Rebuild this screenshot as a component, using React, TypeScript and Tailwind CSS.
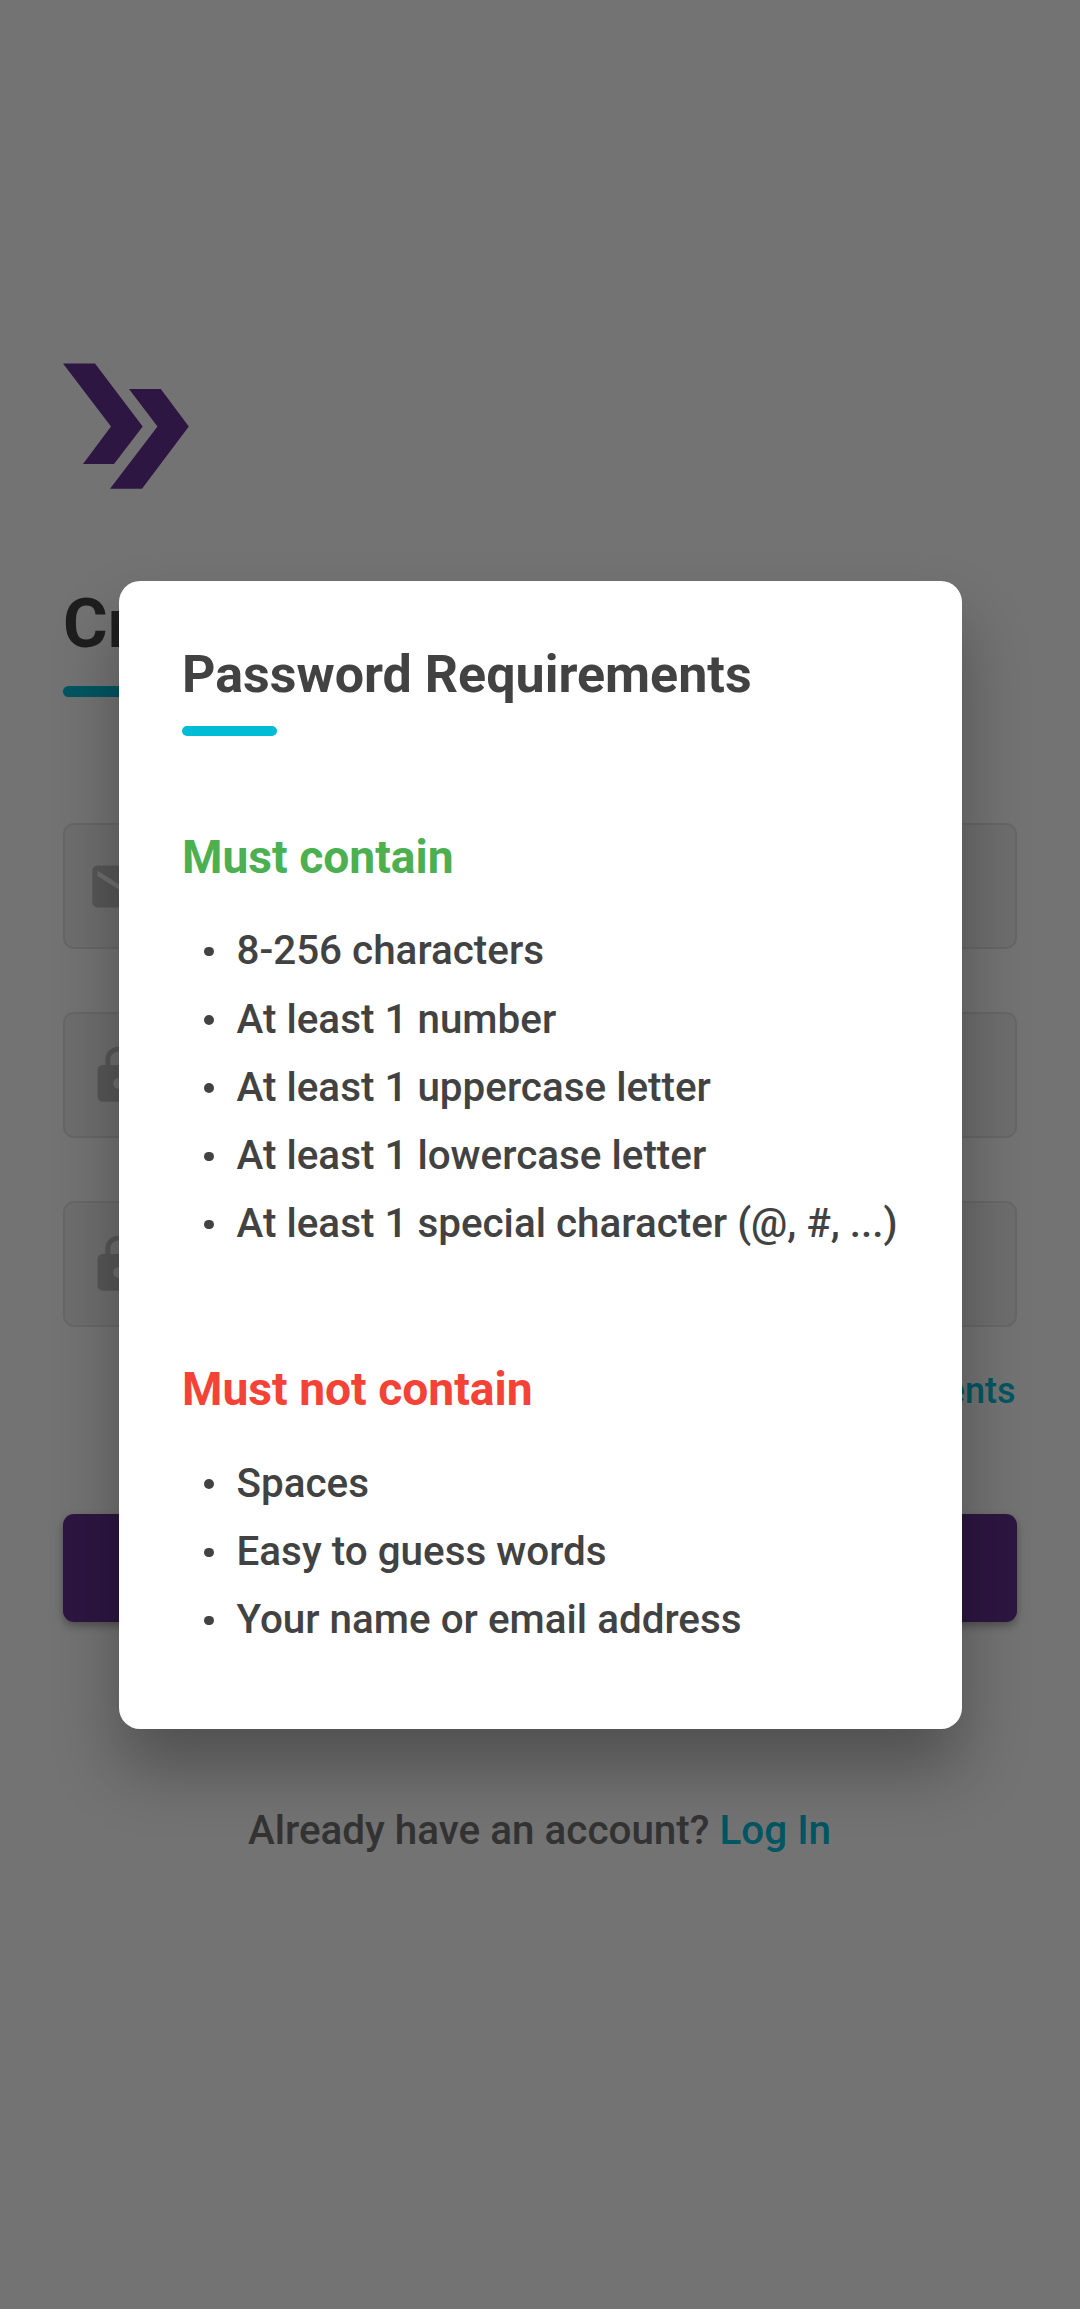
const contain = [
  '8-256 characters',
  'At least 1 number',
  'At least 1 uppercase letter',
  'At least 1 lowercase letter',
  'At least 1 special character (@, #, ...)',
];

const notContain = ['Spaces', 'Easy to guess words', 'Your name or email address'];

const MAIL =
  'M20 4H4c-1.1 0-1.99.9-1.99 2L2 18c0 1.1.9 2 2 2h16c1.1 0 2-.9 2-2V6c0-1.1-.9-2-2-2zm0 4l-8 5-8-5V6l8 5 8-5v2z';
const LOCK =
  'M18 8h-1V6c0-2.76-2.24-5-5-5S7 3.24 7 6v2H6c-1.1 0-2 .9-2 2v10c0 1.1.9 2 2 2h12c1.1 0 2-.9 2-2V10c0-1.1-.9-2-2-2zm-6 9c-1.1 0-2-.9-2-2s.9-2 2-2 2 .9 2 2-.9 2-2 2zm3.1-9H8.9V6c0-1.71 1.39-3.1 3.1-3.1 1.71 0 3.1 1.39 3.1 3.1v2z';

function Logo() {
  return (
    <svg className="h-[126px] w-[126px]" viewBox="0 0 126 126" fill="#62308f" aria-hidden="true">
      <path d="M0 .4H32L79.7 63.5 51 101H20L48 63.5Z" />
      <path d="M66 26H97.8L125.8 63.5 79 125.8H47L94.5 63.5Z" />
    </svg>
  );
}

function Field({ icon }: { icon: string }) {
  return (
    <div className="flex h-[126px] items-center rounded-[11px] border-2 border-[#e0e0e0] bg-[#f0f0f0] pl-[21.5px]">
      <svg className="size-[63px]" viewBox="0 0 24 24" fill="#bdbdbd" aria-hidden="true">
        <path d={icon} />
      </svg>
    </div>
  );
}

function Requirements({ items }: { items: string[] }) {
  return (
    <ul className="text-[40.4px] leading-[68.25px] font-medium">
      {items.map((item) => (
        <li key={item} className="flex items-center">
          <span className="mr-[23px] ml-[22px] size-[9.5px] shrink-0 rounded-full bg-[#424242]" />
          <span className="whitespace-nowrap">{item}</span>
        </li>
      ))}
    </ul>
  );
}

export default function App() {
  return (
    <div className="relative h-[2309px] w-[1080px] overflow-hidden bg-[#fafafa] font-['Roboto',sans-serif] text-[#424242]">
      <main className="flex flex-col px-[63px] pt-[363px]">
        <Logo />
        <h1 className="mt-[95px] text-[68.25px] leading-[80px] font-bold">Create Account</h1>
        <div className="mt-[22px] h-[11px] w-[126px] rounded-full bg-[#00bcd4]" />
        <div className="mt-[126px] flex flex-col gap-[63px]">
          <Field icon={MAIL} />
          <Field icon={LOCK} />
          <Field icon={LOCK} />
        </div>
        <p className="mt-[42px] pr-[1.5px] text-right text-[36px] leading-[44px] font-medium text-[#00bcd4]">Password requirements</p>
        <button
          aria-label="Create account"
          className="mt-[101px] h-[108px] rounded-[11px] bg-[#62308f] shadow-[0_4px_8px_rgba(0,0,0,0.3)]"
        />
        <p className="mt-[184px] pr-px text-center text-[40.4px] leading-[50px] font-medium text-[#707070]">
          Already have an account? <span className="text-[#00bcd4]">Log In</span>
        </p>
      </main>

      <div className="absolute inset-0 flex items-center justify-center bg-black/54 pt-px pl-[0.5px]">
        <section
          role="dialog"
          className="h-[1147.5px] w-[842.5px] rounded-[21px] bg-white px-[63px] pt-[64px] shadow-[0_40px_66px_rgba(0,0,0,0.3)]"
        >
          <h2 className="text-[52px] leading-[60px] font-bold">Password Requirements</h2>
          <div className="mt-[20.5px] h-[10.5px] w-[94.5px] rounded-full bg-[#00bcd4]" />
          <h3 className="mt-[92.5px] mb-[32.7px] text-[46.2px] leading-[56px] font-bold text-[#4caf50]">Must contain</h3>
          <Requirements items={contain} />
          <h3 className="mt-[102.8px] mb-[32.5px] text-[46.2px] leading-[56px] font-bold text-[#f44336]">Must not contain</h3>
          <Requirements items={notContain} />
        </section>
      </div>
    </div>
  );
}
